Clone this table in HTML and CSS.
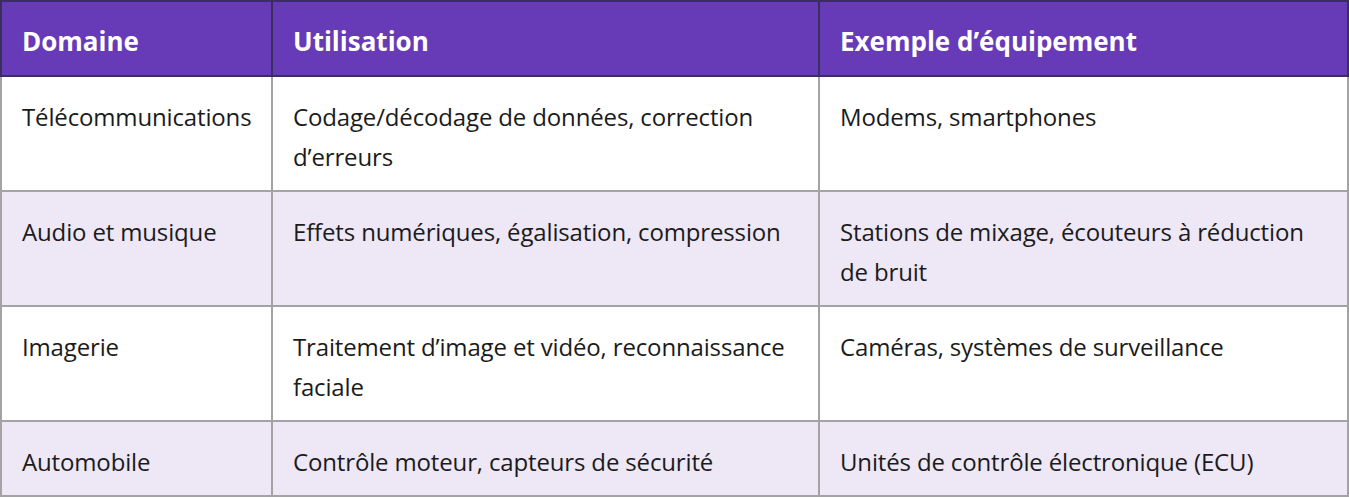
FILE: index.html
```html
<!DOCTYPE html>
<html lang="fr">
<head>
<meta charset="utf-8">
<link rel="stylesheet" href="styles.css">
</head>
<body>
<table class="tbl">
  <colgroup>
    <col class="c1">
    <col class="c2">
    <col class="c3">
  </colgroup>
  <thead>
    <tr>
      <th>Domaine</th>
      <th>Utilisation</th>
      <th>Exemple d’équipement</th>
    </tr>
  </thead>
  <tbody>
    <tr>
      <td>Télécommunications</td>
      <td>Codage/décodage de données, correction d’erreurs</td>
      <td>Modems, smartphones</td>
    </tr>
    <tr class="alt">
      <td>Audio et musique</td>
      <td>Effets numériques, égalisation, compression</td>
      <td>Stations de mixage, écouteurs à réduction de bruit</td>
    </tr>
    <tr>
      <td>Imagerie</td>
      <td>Traitement d’image et vidéo, reconnaissance faciale</td>
      <td>Caméras, systèmes de surveillance</td>
    </tr>
    <tr class="alt">
      <td>Automobile</td>
      <td>Contrôle moteur, capteurs de sécurité</td>
      <td>Unités de contrôle électronique (ECU)</td>
    </tr>
  </tbody>
</table>
</body>
</html>
```
FILE: styles.css
```css
html, body {
  margin: 0;
  padding: 0;
  background: #ffffff;
}
body {
  font-family: "Open Sans", "Noto Sans", sans-serif;
  font-size: 24px;
  color: #1b1b1b;
}
.tbl {
  border-collapse: collapse;
  width: 1349px;
  table-layout: fixed;
}
.c1 { width: 271px; }
.c2 { width: 547px; }
.tbl th,
.tbl td {
  text-align: left;
  vertical-align: top;
  padding: 20px 20px 13px 20px;
  line-height: 40px;
}
.tbl th {
  background: #673ab7;
  color: #ffffff;
  font-weight: 700;
  font-size: 26px;
  border: 2px solid #3b2d5c;
  padding-top: 19px;
  padding-bottom: 14px;
}
.tbl td {
  border: 2px solid #a3a3a3;
  letter-spacing: -0.15px;
}
.tbl tr.alt td {
  background: #ede7f6;
}
```
